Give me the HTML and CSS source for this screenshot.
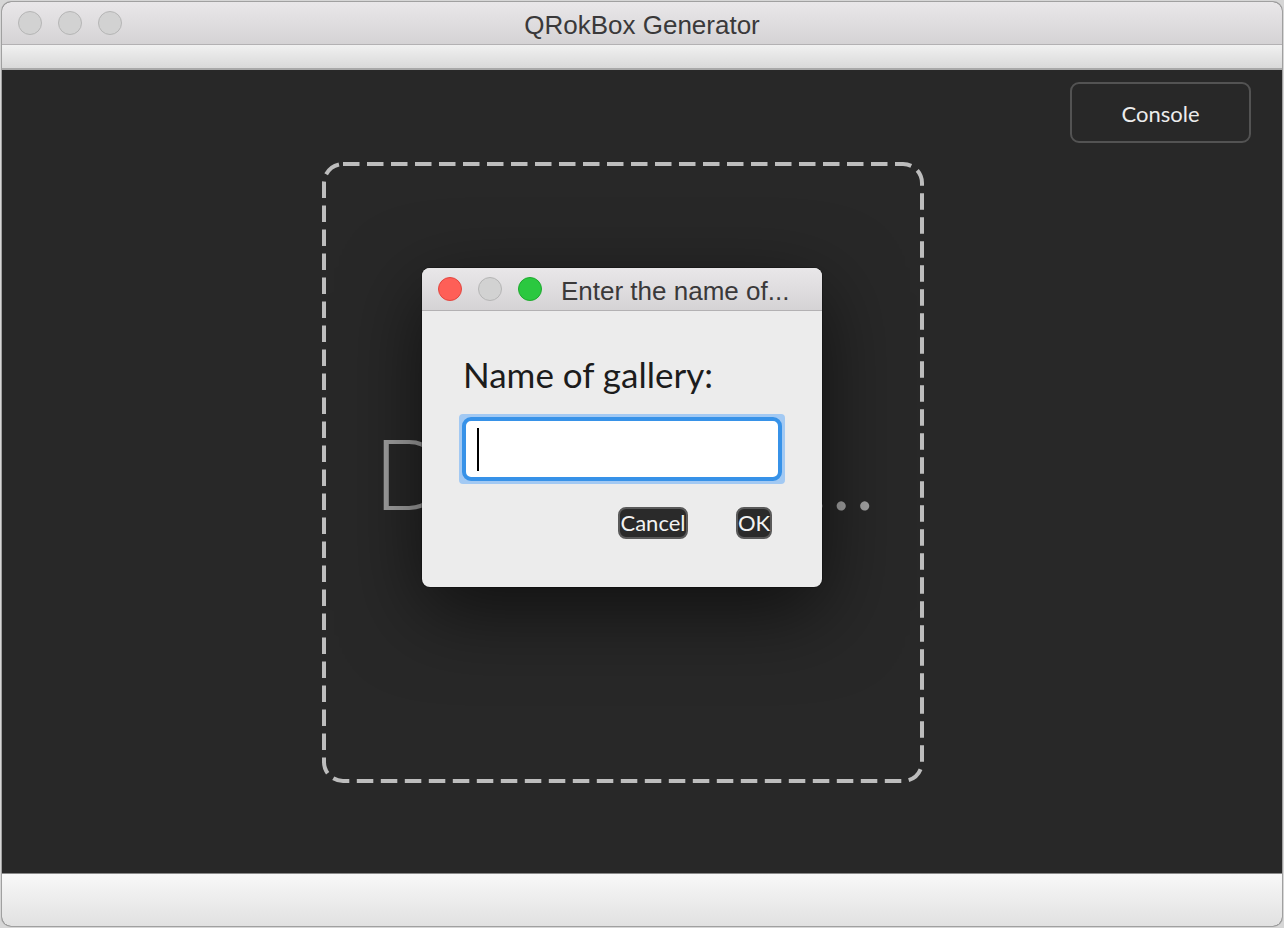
FILE: index.html
```html
<!DOCTYPE html>
<html>
<head>
<meta charset="utf-8">
<title>QRokBox Generator</title>
<link rel="stylesheet" href="styles.css">
</head>
<body>
<div class="window">
  <div class="titlebar">
    <div class="lights">
      <span class="light"></span>
      <span class="light"></span>
      <span class="light"></span>
    </div>
    <div class="title">QRokBox Generator</div>
  </div>
  <div class="toolbar"></div>
  <div class="content">
    <div class="toprow">
      <button class="console">Console</button>
    </div>
    <div class="dropzone">
      <svg class="dash" width="602" height="621" viewBox="0 0 602 621">
        <rect x="2" y="2" width="598" height="617" rx="19" ry="19" fill="none" stroke="#bdbdbd" stroke-width="4" stroke-dasharray="16.5 7.5"/>
      </svg>
      <div class="droptext">Drop here...</div>
    </div>
    <div class="dialog">
      <div class="dtitlebar">
        <div class="lights">
          <span class="light red"></span>
          <span class="light"></span>
          <span class="light green"></span>
        </div>
        <div class="dtitle">Enter the name of...</div>
      </div>
      <div class="dbody">
        <div class="label">Name of gallery:</div>
        <div class="ring">
          <div class="field"><span class="caret"></span></div>
        </div>
        <div class="actions">
          <button class="dbtn cancel">Cancel</button>
          <button class="dbtn ok">OK</button>
        </div>
      </div>
    </div>
  </div>
  <div class="bottombar"></div>
</div>
</body>
</html>
```
FILE: styles.css
```css
html, body {
  margin: 0;
  padding: 0;
}
body {
  background: #d6d6d6;
  padding: 2px;
  width: 1284px;
  height: 928px;
  box-sizing: border-box;
  overflow: hidden;
}
.window {
  width: 1280px;
  height: 924px;
  display: flex;
  flex-direction: column;
  border-radius: 9px;
  overflow: hidden;
  background: #282828;
  box-shadow: 0 0 0 1px #a0a0a0;
}
.titlebar {
  height: 42px;
  flex: none;
  display: flex;
  align-items: center;
  position: relative;
  background: linear-gradient(#e9e7e9, #d5d3d5);
  border-bottom: 1px solid #b3b1b3;
}
.lights {
  display: flex;
  gap: 16px;
  padding-left: 16px;
}
.light {
  width: 22px;
  height: 22px;
  border-radius: 50%;
  background: #d2d2d2;
  border: 1px solid #b5b5b5;
  display: block;
}
.light.red {
  background: #fe5f57;
  border-color: #e2463f;
}
.light.green {
  background: #2bc840;
  border-color: #1eaa2e;
}
.title {
  position: absolute;
  left: 0;
  right: 0;
  top: 0;
  bottom: 0;
  display: flex;
  align-items: center;
  justify-content: center;
  font-family: "Liberation Sans", Arial, sans-serif;
  font-size: 26px;
  color: #3a393a;
  padding-top: 4px;
}
.toolbar {
  height: 23px;
  flex: none;
  background: linear-gradient(#f1f1f1, #d9d9d9);
  border-bottom: 2px solid #a8a8a8;
}
.content {
  flex: 1;
  position: relative;
  background: #282828;
  display: flex;
  flex-direction: column;
}
.toprow {
  display: flex;
  justify-content: flex-end;
  padding: 12px 31px 0 0;
}
.console {
  width: 181px;
  height: 61px;
  box-sizing: border-box;
  background: #282828;
  border: 2px solid #535353;
  border-radius: 9px;
  color: #ececec;
  font-family: Lato, "Open Sans", sans-serif;
  font-size: 22px;
  padding: 2px 0 0 0;
}
.dropzone {
  position: relative;
  margin: 19px 0 0 320px;
  width: 602px;
  height: 621px;
  display: flex;
  align-items: center;
  justify-content: center;
}
.dash {
  position: absolute;
  left: 0;
  top: 0;
}
.droptext {
  font-family: Lato, "Open Sans", sans-serif;
  font-weight: 300;
  font-size: 98px;
  letter-spacing: 0.5px;
  color: #a3a3a3;
  white-space: nowrap;
  margin-top: -2px;
  padding-left: 4px;
}
.dialog {
  position: absolute;
  left: 420px;
  top: 198px;
  width: 400px;
  height: 319px;
  border-radius: 8px;
  overflow: hidden;
  background: #ececec;
  box-shadow: 0 24px 80px rgba(0, 0, 0, 0.6), 0 0 0 1px rgba(0, 0, 0, 0.25);
  display: flex;
  flex-direction: column;
}
.dtitlebar {
  height: 42px;
  flex: none;
  display: flex;
  align-items: center;
  background: linear-gradient(#e9e7e9, #d5d3d5);
  border-bottom: 1px solid #b3b1b3;
}
.dtitle {
  font-family: "Liberation Sans", Arial, sans-serif;
  font-size: 26px;
  color: #3a393a;
  padding-left: 19px;
  padding-top: 4px;
  white-space: nowrap;
}
.dbody {
  flex: 1;
  padding: 0 0 0 37px;
  display: flex;
  flex-direction: column;
}
.label {
  font-family: Lato, "Open Sans", sans-serif;
  font-size: 35px;
  color: #1c1c1c;
  padding-left: 4px;
  margin-top: 42px;
  line-height: 42px;
}
.ring {
  margin-top: 19px;
  width: 326px;
  height: 70px;
  box-sizing: border-box;
  border: 3px solid #a2c9f3;
  border-radius: 4px;
  background: #a2c9f3;
}
.field {
  width: 100%;
  height: 100%;
  box-sizing: border-box;
  background: #ffffff;
  border: 4px solid #3792e8;
  border-radius: 9px;
  display: flex;
  align-items: center;
  padding-left: 11px;
}
.caret {
  width: 2px;
  height: 43px;
  background: #000;
  display: block;
}
.actions {
  display: flex;
  gap: 48px;
  padding-left: 159px;
  margin-top: 23px;
}
.dbtn {
  height: 32px;
  box-sizing: border-box;
  background: #2a2a2a;
  border: 2px solid #5a5a5a;
  border-radius: 8px;
  color: #f2f2f2;
  font-family: Lato, "Open Sans", sans-serif;
  font-size: 22px;
  padding: 0;
  line-height: 26px;
  white-space: nowrap;
}
.cancel {
  width: 70px;
}
.ok {
  width: 36px;
}
.bottombar {
  height: 52px;
  flex: none;
  background: linear-gradient(#f8f8f8, #e1e1e1);
  border-top: 1px solid #8a8a8a;
}
```
